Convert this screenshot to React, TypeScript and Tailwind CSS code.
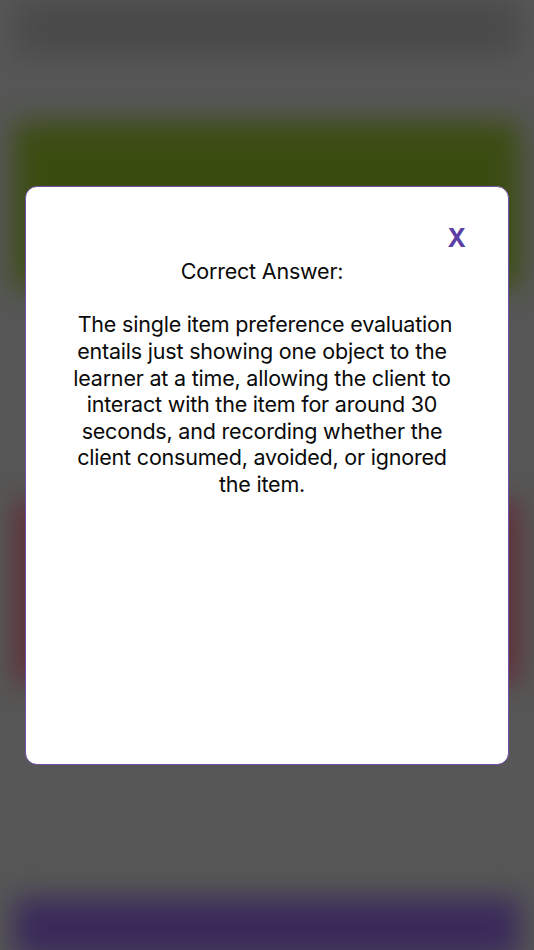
const lines = [
  ' The single item preference evaluation',
  'entails just showing one object to the',
  'learner at a time, allowing the client to',
  'interact with the item for around 30',
  'seconds, and recording whether the',
  'client consumed, avoided, or ignored',
  'the item.',
];

function BlurredPage() {
  return (
    <div className="flex h-full flex-col px-[14px] blur-[14px]">
      <div className="h-[56px] shrink-0 bg-[#4a4a4a]" />
      <div className="h-[66px] shrink-0" />
      <div className="h-[166px] shrink-0 bg-[#3b4c11]" />
      <div className="h-[212px] shrink-0" />
      <div className="h-[184px] shrink-0 bg-[#5f3038]" />
      <div className="h-[214px] shrink-0" />
      <div className="h-[60px] shrink-0 bg-[#3a2a5a]" />
    </div>
  );
}

export default function App() {
  return (
    <div className="relative h-[950px] w-[534px] overflow-hidden bg-[#565756] font-['Inter',sans-serif]">
      <BlurredPage />
      <div className="absolute inset-0 flex items-center justify-center">
        <div className="h-[579px] w-[484px] rounded-[12px] border-[1.5px] border-[#7050a8] bg-white pt-[28px]">
          <div className="flex justify-end pr-[42px]">
            <span className="text-[25px] leading-[46px] font-bold text-[#5b3fa5]">X</span>
          </div>
          <div className="-mt-[3px] pr-[10px] text-center text-[21.5px] leading-[26.6px] tracking-[-0.2px] text-[#0a0a0a]">
            <p>Correct Answer:</p>
            <p className="mt-[27.4px]">
              {lines.map((l) => (
                <span key={l} className="block whitespace-pre">
                  {l}
                </span>
              ))}
            </p>
          </div>
        </div>
      </div>
    </div>
  );
}
